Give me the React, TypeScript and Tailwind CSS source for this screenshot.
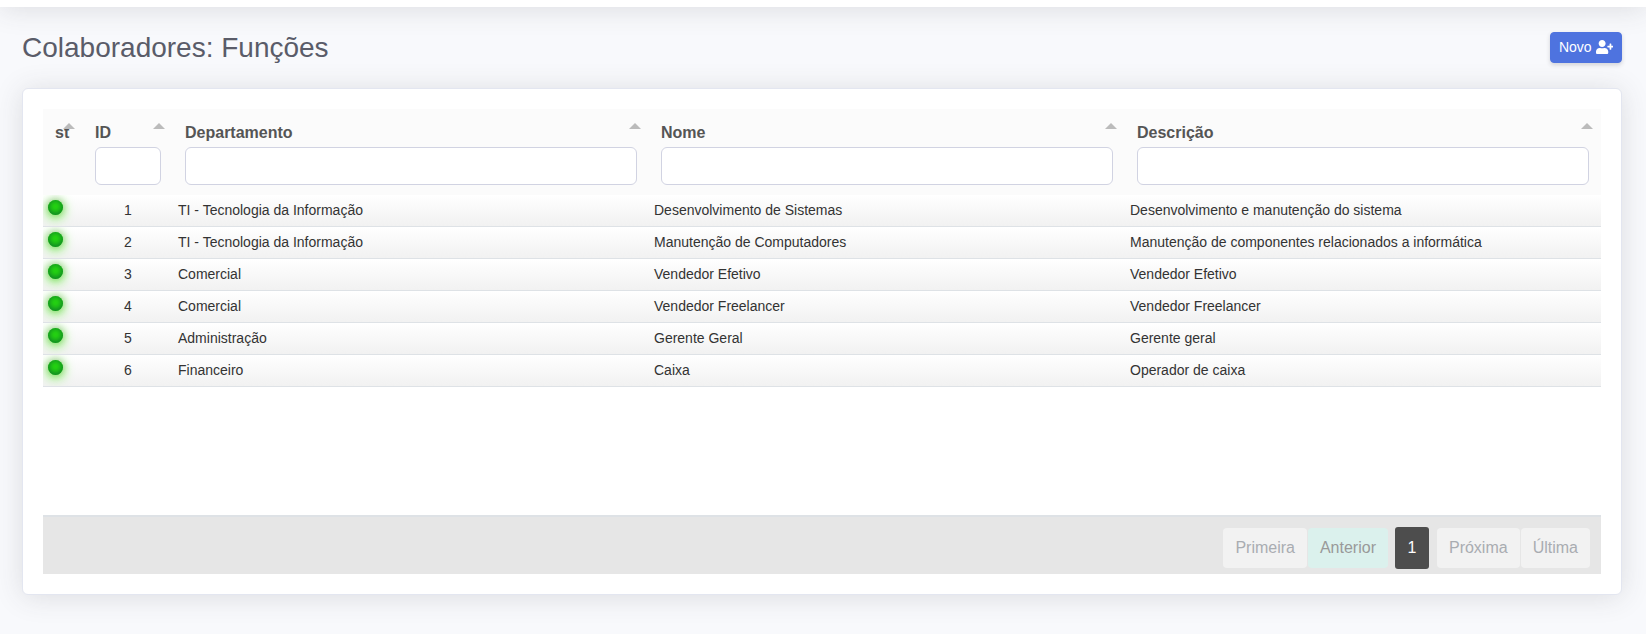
import { useState } from "react";
import { FaUserPlus } from "react-icons/fa";

type Role = {
  id: string;
  departamento: string;
  nome: string;
  descricao: string;
};

const roles: Role[] = [
  { id: "1", departamento: "TI - Tecnologia da Informação", nome: "Desenvolvimento de Sistemas", descricao: "Desenvolvimento e manutenção do sistema" },
  { id: "2", departamento: "TI - Tecnologia da Informação", nome: "Manutenção de Computadores", descricao: "Manutenção de componentes relacionados a informática" },
  { id: "3", departamento: "Comercial", nome: "Vendedor Efetivo", descricao: "Vendedor Efetivo" },
  { id: "4", departamento: "Comercial", nome: "Vendedor Freelancer", descricao: "Vendedor Freelancer" },
  { id: "5", departamento: "Administração", nome: "Gerente Geral", descricao: "Gerente geral" },
  { id: "6", departamento: "Financeiro", nome: "Caixa", descricao: "Operador de caixa" },
];

const columns: { key: keyof Role; title: string }[] = [
  { key: "id", title: "ID" },
  { key: "departamento", title: "Departamento" },
  { key: "nome", title: "Nome" },
  { key: "descricao", title: "Descrição" },
];

function SortArrow() {
  return (
    <button type="button" className="absolute right-2 top-3.5 block h-1.5 w-3 text-[#bbb]">
      <svg viewBox="0 0 12 6" className="block h-1.5 w-3" fill="currentColor" aria-hidden="true">
        <path d="M6 0 12 6H0Z" />
      </svg>
    </button>
  );
}

function HeaderCell({ id, title, value, onChange }: { id: string; title: string; value: string; onChange: (value: string) => void }) {
  return (
    <th className="relative px-3 pb-2.5 pt-3 text-left align-top font-bold">
      <label htmlFor={id} className="mb-0.5 block leading-6">
        {title}
      </label>
      <input
        id={id}
        type="search"
        value={value}
        onChange={(event) => onChange(event.target.value)}
        className="block h-[38px] w-full rounded-md border border-[#d1d3e2] bg-white px-3 font-normal text-[#6e707e] outline-none focus:border-[#bac8f3]"
      />
      <SortArrow />
    </th>
  );
}

function Pagination() {
  return (
    <nav aria-label="Paginação" className="flex justify-end border-t-2 border-[#dee2e6] bg-[#e6e6e6] px-[11px] pb-[5px] pt-2.5 text-base">
      <div className="flex items-center">
        <button type="button" disabled className="h-10 rounded bg-[#f2f2f2] px-3 text-[#a9acb1]">
          Primeira
        </button>
        <button type="button" disabled className="ml-px h-10 rounded bg-[#dbf1ed] px-3 text-[#999]">
          Anterior
        </button>
        <button type="button" aria-current="page" className="ml-[7px] mr-2 h-[42px] min-w-[34px] rounded-[3px] bg-[#4d4d4d] px-3 text-white">
          1
        </button>
        <button type="button" disabled className="h-10 rounded bg-[#f2f2f2] px-3 text-[#a9acb1]">
          Próxima
        </button>
        <button type="button" disabled className="ml-px h-10 rounded bg-[#f2f2f2] px-3 text-[#a9acb1]">
          Última
        </button>
      </div>
    </nav>
  );
}

export default function App() {
  const [filters, setFilters] = useState<Role>({ id: "", departamento: "", nome: "", descricao: "" });

  const visible = roles.filter((role) =>
    columns.every(({ key }) => role[key].toLowerCase().includes(filters[key].toLowerCase())),
  );

  return (
    <div className="min-h-screen overflow-hidden bg-[#f8f9fc] font-['Liberation_Sans',Arial,sans-serif] text-[#5a5c69]">
      <header className="-mt-[63px] h-[70px] bg-white shadow-[0_2px_28px_0_rgba(58,59,69,0.15)]" />
      <main className="pb-6 pl-[22px] pr-6 pt-6">
        <div className="mb-6 flex items-center justify-between">
          <h1 className="text-[28px] leading-[33px]">Colaboradores: Funções</h1>
          <button
            type="button"
            className="rounded border border-[#4e73df] bg-[#4e73df] px-2 py-1 text-sm leading-[21px] text-white shadow-[0_2px_4px_0_rgba(58,59,69,0.2)]"
          >
            Novo <FaUserPlus className="inline h-[1em] w-[1.25em] align-[-0.125em]" aria-hidden="true" />
          </button>
        </div>

        <section className="rounded-md border border-[#e3e6f0] bg-white p-5 shadow-[0_2px_28px_0_rgba(58,59,69,0.15)]">
          <div className="min-h-[406px]">
            <table className="w-full table-fixed border-separate border-spacing-0">
              <colgroup>
                <col className="w-10" />
                <col className="w-[90px]" />
                <col />
                <col />
                <col />
              </colgroup>
              <thead className="bg-[#fbfbfb] text-base text-[#555]">
                <tr>
                  <th className="relative pb-2.5 pl-3 pt-3 text-left align-top font-bold leading-6">
                    st
                    <SortArrow />
                  </th>
                  {columns.map(({ key, title }) => (
                    <HeaderCell
                      key={key}
                      id={`filtro-${key}`}
                      title={title}
                      value={filters[key]}
                      onChange={(value) => setFilters({ ...filters, [key]: value })}
                    />
                  ))}
                </tr>
              </thead>
              <tbody className="text-sm leading-[21px] text-[#333]">
                {visible.map((role) => (
                  <tr key={role.id} className="bg-linear-to-b from-white to-[#f1f1f1]">
                    <td className="h-8 overflow-hidden border-b border-[#dee2e6] p-[5px] align-top">
                      <span className="block size-[15px] rounded-full bg-[#2df00a] shadow-[0_-1px_7px_1px_rgba(0,0,0,0.15),inset_0_-1px_9px_#066030,0_2px_12px_#44f010]" />
                    </td>
                    <td className="h-8 border-b border-[#dee2e6] p-[5px] text-center">{role.id}</td>
                    <td className="h-8 truncate border-b border-[#dee2e6] p-[5px]">{role.departamento}</td>
                    <td className="h-8 truncate border-b border-[#dee2e6] p-[5px]">{role.nome}</td>
                    <td className="h-8 truncate border-b border-[#dee2e6] p-[5px]">{role.descricao}</td>
                  </tr>
                ))}
              </tbody>
            </table>
          </div>
          <Pagination />
        </section>
      </main>
    </div>
  );
}
